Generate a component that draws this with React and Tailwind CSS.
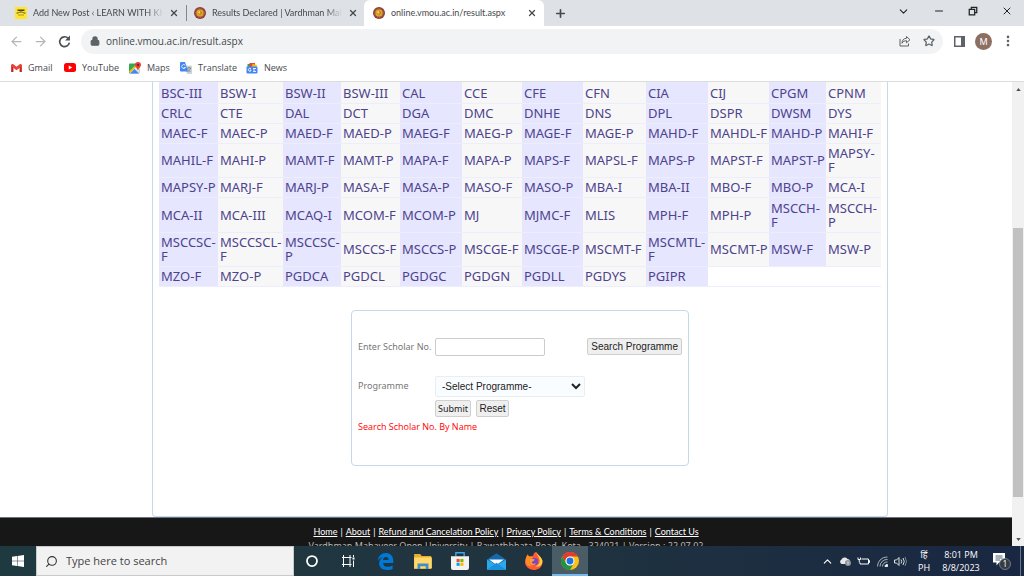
import { ArrowLeft, ArrowRight, ChevronDown, ChevronUp, EllipsisVertical, Lock, Minus, Plus, Search, Star, X } from 'lucide-react';

const programmes = [
  ['BSC-III', 'BSW-I', 'BSW-II', 'BSW-III', 'CAL', 'CCE', 'CFE', 'CFN', 'CIA', 'CIJ', 'CPGM', 'CPNM'],
  ['CRLC', 'CTE', 'DAL', 'DCT', 'DGA', 'DMC', 'DNHE', 'DNS', 'DPL', 'DSPR', 'DWSM', 'DYS'],
  ['MAEC-F', 'MAEC-P', 'MAED-F', 'MAED-P', 'MAEG-F', 'MAEG-P', 'MAGE-F', 'MAGE-P', 'MAHD-F', 'MAHDL-F', 'MAHD-P', 'MAHI-F'],
  ['MAHIL-F', 'MAHI-P', 'MAMT-F', 'MAMT-P', 'MAPA-F', 'MAPA-P', 'MAPS-F', 'MAPSL-F', 'MAPS-P', 'MAPST-F', 'MAPST-P', 'MAPSY- F'],
  ['MAPSY-P', 'MARJ-F', 'MARJ-P', 'MASA-F', 'MASA-P', 'MASO-F', 'MASO-P', 'MBA-I', 'MBA-II', 'MBO-F', 'MBO-P', 'MCA-I'],
  ['MCA-II', 'MCA-III', 'MCAQ-I', 'MCOM-F', 'MCOM-P', 'MJ', 'MJMC-F', 'MLIS', 'MPH-F', 'MPH-P', 'MSCCH- F', 'MSCCH- P'],
  ['MSCCSC- F', 'MSCCSCL- F', 'MSCCSC- P', 'MSCCS-F', 'MSCCS-P', 'MSCGE-F', 'MSCGE-P', 'MSCMT-F', 'MSCMTL- F', 'MSCMT-P', 'MSW-F', 'MSW-P'],
  ['MZO-F', 'MZO-P', 'PGDCA', 'PGDCL', 'PGDGC', 'PGDGN', 'PGDLL', 'PGDYS', 'PGIPR']
];

const rowHeights = ['h-[21px]', 'h-[20px]', 'h-[20px]', 'h-[34px]', 'h-[20px]', 'h-[35px]', 'h-[34px]', 'h-[20px]'];

const colWidths = [
  'w-[59px]', 'w-[65px]', 'w-[58px]', 'w-[59px]', 'w-[62px]', 'w-[60px]',
  'w-[61px]', 'w-[63px]', 'w-[62px]', 'w-[61px]', 'w-[57px]', 'w-[55px]'
];

const footerLinks = ['Home', 'About', 'Refund and Cancelation Policy', 'Privacy Policy', 'Terms & Conditions', 'Contact Us'];

function SealIcon() {
  return (
    <svg viewBox="0 0 24 24" className="size-[12px] shrink-0">
      <circle cx="12" cy="12" r="12" fill="#8f3a3c" />
      <circle cx="12" cy="12" r="9" fill="none" stroke="#c07a4a" strokeWidth="1.5" strokeDasharray="2 2" />
      <circle cx="12" cy="12" r="7.5" fill="#d9a520" />
      <circle cx="12" cy="12" r="4" fill="#f1d35a" />
      <path d="M9 12a3 3 0 1 0 3-3M12 12h3" fill="none" stroke="#a8631d" strokeWidth="1.5" />
    </svg>
  );
}

function KkhIcon() {
  return (
    <svg viewBox="0 0 24 24" className="size-[12px] shrink-0">
      <rect width="24" height="24" fill="#ffe52e" />
      <path d="M5 5h14v3H5z" fill="#4a4420" />
      <path d="M3 12h4l2-2h6l2 2h4" fill="none" stroke="#5b5120" strokeWidth="2" />
      <path d="M6 16h12" stroke="#a8962a" strokeWidth="2" />
    </svg>
  );
}

function GmailIcon() {
  return (
    <svg viewBox="0 0 24 18" className="h-[8px] w-[11px]">
      <path d="M0 2v16h5V7z" fill="#c5221f" />
      <path d="M24 2v16h-5V7z" fill="#c5221f" />
      <path d="M0 2.5C0 0 3-1 5 .8l7 5.400 7-5.400c2-1.800 5-.8 5 1.700V5L12 14 0 5z" fill="#ea4335" />
    </svg>
  );
}

function YoutubeIcon() {
  return (
    <svg viewBox="0 0 24 18" className="h-[9px] w-[12px]">
      <rect width="24" height="18" rx="5" fill="#f00" />
      <path d="M9.500 5v8l7-4z" fill="#fff" />
    </svg>
  );
}

function MapsIcon() {
  return (
    <svg viewBox="0 0 24 24" className="size-[12px]">
      <rect y="3" width="21" height="20" rx="2" fill="#34a853" />
      <path d="M0 23 17 6l4 4v11l-2 2z" fill="#dfe5e8" />
      <path d="M2 23 11 14l9 9z" fill="#4285f4" />
      <path d="M0 19 13 6l2 2L2 22z" fill="#fbbc04" />
      <path d="M18 0a6 6 0 0 0-6 6c0 4 4 5 6 11 2-6 6-7 6-11a6 6 0 0 0-6-6z" fill="#ea4335" />
      <circle cx="18" cy="6" r="2.300" fill="#8b1a12" />
    </svg>
  );
}

function TranslateIcon() {
  return (
    <svg viewBox="0 0 24 24" className="size-[12px]">
      <path d="M9 7h13a2 2 0 0 1 2 2v13a2 2 0 0 1-2 2h-8z" fill="#cfd3d8" />
      <path d="M14 12h8M18 10v2M21 12c-1 4-3 6-6 7M15 13c1 3 3 5 6 6" fill="none" stroke="#607d8b" strokeWidth="1.500" />
      <path d="M2 0h8l6 19H2a2 2 0 0 1-2-2V2a2 2 0 0 1 2-2z" fill="#4285f4" />
      <path d="M10.500 6.500A4 4 0 1 0 11 11H7.500" fill="none" stroke="#fff" strokeWidth="1.600" />
    </svg>
  );
}

function NewsIcon() {
  return (
    <svg viewBox="0 0 24 24" className="size-[12px]">
      <path d="M3 4h9v7H3z" fill="#34a853" />
      <path d="M7 2h11v8H7z" fill="#ea4335" />
      <path d="m13 4 9 2-2 8-9-2z" fill="#fbbc04" />
      <rect x="1" y="9" width="22" height="14" rx="2" fill="#4285f4" />
      <path d="M10 13.500a3 3 0 1 0 0 4v-1.500H8M14 13h6M14 16h4M14 19h6" fill="none" stroke="#fff" strokeWidth="1.700" />
    </svg>
  );
}

function ShareIcon() {
  return (
    <svg viewBox="0 0 24 24" className="size-[12px]" fill="none" stroke="#5f6368" strokeWidth="2" strokeLinejoin="round">
      <path d="M2 8v14h17v-5" />
      <path d="M15 3l7 6.500-7 6v-4c-4 0-7 1-9 5 0-6 3-9.500 9-10z" />
    </svg>
  );
}

const bookmarks = [
  { name: 'Gmail', icon: <GmailIcon />, width: 'w-[53px]' },
  { name: 'YouTube', icon: <YoutubeIcon />, width: 'w-[65px]' },
  { name: 'Maps', icon: <MapsIcon />, width: 'w-[51px]' },
  { name: 'Translate', icon: <TranslateIcon />, width: 'w-[66px]' },
  { name: 'News', icon: <NewsIcon />, width: 'w-[50px]' }
];

function TabStrip() {
  return (
    <div className="flex h-[26px] items-center bg-[#dee1e6] font-['Lato',sans-serif] text-[9px] text-[#45494d]">
      <div className="flex h-4 w-[187px] items-center gap-[6px] border-r border-[#85898e] pl-[15px] pr-[7px]">
        <KkhIcon />
        <span className="flex-1 overflow-hidden whitespace-nowrap [mask-image:linear-gradient(to_right,black_88%,transparent)]">Add New Post ‹ LEARN WITH KKH</span>
        <button aria-label="Close tab"><X className="size-[10px]" strokeWidth={3} /></button>
      </div>
      <div className="flex h-4 w-[177px] items-center gap-[6px] pl-[7px] pr-[6px]">
        <SealIcon />
        <span className="flex-1 overflow-hidden whitespace-nowrap [mask-image:linear-gradient(to_right,black_88%,transparent)]">Results Declared | Vardhman Mah</span>
        <button aria-label="Close tab"><X className="size-[10px]" strokeWidth={3} /></button>
      </div>
      <div className="flex h-full w-[180px] items-center gap-[6px] rounded-t-md bg-white pl-[9px] pr-[7px]">
        <SealIcon />
        <span className="flex-1 whitespace-nowrap">online.vmou.ac.in/result.aspx</span>
        <button aria-label="Close tab"><X className="size-[10px]" strokeWidth={3} /></button>
      </div>
      <button aria-label="New tab" className="ml-[10px]"><Plus className="size-[13px]" strokeWidth={3} /></button>
      <div className="mb-1 ml-auto flex items-center gap-[23px] pr-[11px] text-[#222]">
        <button aria-label="Search tabs"><ChevronDown className="size-[13px]" /></button>
        <button aria-label="Minimize"><Minus className="size-[12px]" /></button>
        <button aria-label="Restore">
          <svg viewBox="0 0 12 12" className="size-[10px]" fill="none" stroke="#222" strokeWidth="1.500">
            <path d="M1.500 4h6.500v6.500H1.500zM4 4V1.500h6.500V8H8" />
          </svg>
        </button>
        <button aria-label="Close"><X className="size-[12px]" /></button>
      </div>
    </div>
  );
}

function Toolbar() {
  return (
    <div className="flex h-[30px] items-center bg-white pl-[9px] pr-[9px] text-[#5f6368]">
      <button aria-label="Back" className="text-[#b4b7ba]"><ArrowLeft className="size-[15px]" /></button>
      <button aria-label="Forward" className="ml-[9px] text-[#b4b7ba]"><ArrowRight className="size-[15px]" /></button>
      <button aria-label="Reload" className="ml-[10px]">
        <svg viewBox="0 0 24 24" className="size-[13px]">
          <path d="M19 6.500A9 9 0 1 0 21 14" fill="none" stroke="#4c5054" strokeWidth="3" />
          <path d="M22 1v9h-9z" fill="#4c5054" />
        </svg>
      </button>
      <div className="ml-[10px] flex h-[25px] flex-1 items-center rounded-full bg-[#f1f3f4] pl-[9px] pr-[8px]">
        <Lock className="size-[10px] fill-[#5f6368]" strokeWidth={3} />
        <input aria-label="Address" defaultValue="online.vmou.ac.in/result.aspx" className="ml-[6px] min-w-0 flex-1 bg-transparent font-['Open_Sans',sans-serif] text-[10px] text-[#45494d] outline-none" />
        <button aria-label="Share"><ShareIcon /></button>
        <button aria-label="Bookmark" className="ml-[12px]"><Star className="size-[12px]" strokeWidth={2.5} /></button>
      </div>
      <button aria-label="Side panel" className="ml-[11px]">
        <svg viewBox="0 0 22 22" className="size-[11px]">
          <path d="M1.500 1.500h19v19h-19z" fill="none" stroke="#5f6368" strokeWidth="3" />
          <path d="M14 1h7v20h-7z" fill="#5f6368" />
        </svg>
      </button>
      <button className="ml-[10px] size-[17px] rounded-full bg-[#8d6e63] text-[9px] leading-[17px] text-white">M</button>
      <button aria-label="Menu" className="ml-[9px]"><EllipsisVertical className="size-[14px]" strokeWidth={2.5} /></button>
    </div>
  );
}

function ProgrammeTable() {
  return (
    <table className="w-full table-fixed border-collapse text-[13px] leading-[14px] text-[#4d438c]">
      <colgroup>
        {colWidths.map((width, i) => <col key={i} className={width} />)}
      </colgroup>
      <tbody>
        {programmes.map((row, i) => (
          <tr key={i} className={`${rowHeights[i]} border-b border-[#ededfb]`}>
            {row.map((code, j) => (
              <td key={code} className={`p-0 pl-[2px] align-middle ${i === 0 ? 'pt-[2px]' : ''} ${j % 2 === 0 ? 'bg-[#e6e6ff]' : 'bg-[#f7f7f7]'}`}>
                {code.includes(' ') ? <>{code.split(' ')[0]}<br />{code.split(' ')[1]}</> : <span className="whitespace-nowrap">{code}</span>}
              </td>
            ))}
          </tr>
        ))}
      </tbody>
    </table>
  );
}

function SearchForm() {
  const button = 'rounded-[2px] border border-[#cfcfcf] bg-[#efefef] text-[#222]';

  return (
    <form className="mx-auto mt-[23px] w-[338px] max-w-full rounded-[4px] border border-[#c6d9e8] pb-[31px] pl-[6px] pr-[6px] pt-[27px] text-[9px] text-[#777]">
      <div className="flex h-[18px] items-center">
        <label htmlFor="scholar" className="w-[77px] whitespace-nowrap">Enter Scholar No.</label>
        <input id="scholar" type="text" className="h-[18px] w-[110px] rounded-[2px] border border-[#ccc] bg-white px-1 font-['Liberation_Sans',sans-serif] text-[10px]" />
        <button type="button" className={`${button} ml-auto h-[17px] px-[3px] font-['Liberation_Sans',sans-serif] text-[10px] leading-[15px]`}>Search Programme</button>
      </div>
      <div className="mt-5 flex h-[21px] items-center">
        <label htmlFor="programme" className="w-[77px]">Programme</label>
        <select id="programme" className="h-[21px] w-[150px] rounded-[2px] border border-[#e8eef2] bg-[#fafdff] pl-[2px] font-['Liberation_Sans',sans-serif] text-[10px] text-[#222]">
          <option>-Select Programme-</option>
        </select>
      </div>
      <div className="mt-[3px] flex h-[17px] items-center gap-[5px] pl-[77px]">
        <button type="button" className={`${button} h-[17px] w-[36px] text-[9px] leading-[15px]`}>Submit</button>
        <button type="reset" className={`${button} h-[17px] w-[33px] font-['Liberation_Sans',sans-serif] text-[10px] leading-[15px]`}>Reset</button>
      </div>
      <a href="#search" className="mt-[3px] block font-['Open_Sans',sans-serif] leading-[14px] text-[#ff0000]">Search Scholar No. By Name</a>
    </form>
  );
}

function Scrollbar() {
  return (
    <div className="flex w-[12px] flex-col items-center bg-[#f1f1f1]">
      <div className="flex h-[14px] items-center"><svg viewBox="0 0 6 4" className="h-[3px] w-[5px]"><path d="M0 4h6L3 0z" fill="#505050" /></svg></div>
      <div className="grow-[132]" />
      <div className="w-[10px] grow-[270] bg-[#c1c1c1]" />
      <div className="grow-[35]" />
      <div className="flex h-[14px] items-center"><svg viewBox="0 0 6 4" className="h-[3px] w-[5px]"><path d="M0 0h6L3 4z" fill="#505050" /></svg></div>
    </div>
  );
}

function Footer() {
  return (
    <footer className="h-[60px] border-t border-[#6b7280] bg-[#171717] pt-[7px] text-center font-['Lato',sans-serif] text-[9px] leading-[14px] text-[#b8b8b8]">
      <nav className="text-white">
        {footerLinks.map((link, i) => (
          <span key={link}>
            {i > 0 && <span className="px-[3px]">|</span>}
            <a href="#footer" className="underline">{link}</a>
          </span>
        ))}
      </nav>
      <p className="font-['Noto_Sans',sans-serif]">Vardhman Mahaveer Open University | Rawathbhata Road, Kota - 324021 | Version : 22.07.02</p>
    </footer>
  );
}

function EdgeIcon() {
  return (
    <svg viewBox="0 0 24 24" className="size-[17px]">
      <path d="M1 11C2 4 6.500 0 12.500 0 19 0 23 4.500 23 11v3H8.500c.2 4 3 5.500 6.500 5.500 2.500 0 5-.7 7-2v5c-2 1-5 1.500-8 1.500C7.500 24 3 20.500 3 14.500 3 11 5 8 8 6.500 5 6.500 2.500 8.500 1 11zm7.500-1h8c0-3-1.500-4.500-4-4.500S8.800 7 8.500 10z" fill="#0078d7" />
    </svg>
  );
}

function FolderIcon() {
  return (
    <svg viewBox="0 0 26 22" className="h-[15px] w-[18px]">
      <path d="M0 0h9l2 3h14v19H0z" fill="#e9ad32" />
      <path d="M0 5h26v16H0z" fill="#ffd969" />
      <path d="M5 22v-8h16v8h-4v-4H9v4z" fill="#3f8fce" />
    </svg>
  );
}

function StoreIcon() {
  return (
    <svg viewBox="0 0 26 26" className="size-[18px]">
      <path d="M7 7V1h12v6" fill="none" stroke="#39a8e8" strokeWidth="2" />
      <path d="M0 6h26v17a3 3 0 0 1-3 3H3a3 3 0 0 1-3-3z" fill="#f2f2f2" />
      <path d="M8 10h4.500v4.500H8z" fill="#f25022" />
      <path d="M13.500 10H18v4.500h-4.500z" fill="#7fba00" />
      <path d="M8 15.500h4.500V20H8z" fill="#00a4ef" />
      <path d="M13.500 15.500H18V20h-4.500z" fill="#ffb900" />
    </svg>
  );
}

function MailIcon() {
  return (
    <svg viewBox="0 0 28 24" className="h-[17px] w-[19px]">
      <path d="M0 9 14 0l14 9v6H0z" fill="#1468ad" />
      <path d="M3 9h22l-11 8z" fill="#f4f8fb" />
      <path d="M0 9l14 8 14-8v15H0z" fill="#2aa9ed" />
      <path d="M0 24 14 14l14 10z" fill="#1b91db" />
    </svg>
  );
}

function FirefoxIcon() {
  return (
    <svg viewBox="0 0 24 24" className="size-[18px]">
      <path d="M4 3c0 2 1 3 2 3l5-1c0-3 2-5 4-5 0 2 2 3 5 6 3 4 4 6 3 10-1 5-6 8-11 8C5 24 0 19 0 13c0-4 2-7 4-10z" fill="#ff5a36" />
      <path d="M15 0c0 3 3 5 4 9 2 5-1 9-5 10 6 2 10-3 9-8-1-4-5-6-8-11z" fill="#ffd23e" />
      <path d="M4 3c0 2 1 3 2 3 2 0 4 0 5 2l-4 2c-2 1-2 7 3 9-5 1-9-2-9-7 0-4 1-7 3-9z" fill="#ff8f25" />
      <circle cx="12.500" cy="12.500" r="5" fill="#7748c8" />
      <path d="M6 10c3-2 5 0 7 0-1 3-4 2-4 4 1 2 4 2 6 1-2 4-9 3-9-2z" fill="#ff9d2e" />
    </svg>
  );
}

function ChromeIcon() {
  return (
    <svg viewBox="0 0 24 24" className="size-[18px]">
      <circle cx="12" cy="12" r="12" fill="#fbc116" />
      <path d="M1.600 6A12 12 0 0 1 22.400 6H12a6 6 0 0 0-5.200 9z" fill="#e33b2e" />
      <path d="M1.600 6A12 12 0 0 0 12 24l5.200-9A6 6 0 0 1 6.800 15z" fill="#229342" />
      <circle cx="12" cy="12" r="6" fill="#fff" />
      <circle cx="12" cy="12" r="4.600" fill="#1a73e8" />
    </svg>
  );
}

const apps = [
  { name: 'Edge', icon: <EdgeIcon /> },
  { name: 'File Explorer', icon: <FolderIcon /> },
  { name: 'Store', icon: <StoreIcon /> },
  { name: 'Mail', icon: <MailIcon /> },
  { name: 'Firefox', icon: <FirefoxIcon /> }
];

function Tray() {
  return (
    <div className="ml-auto flex h-full items-center font-['Open_Sans','Noto_Sans',sans-serif] text-[9px] leading-[13px] text-white">
      <ChevronUp className="size-[13px]" />
      <svg viewBox="0 0 24 18" className="ml-[5px] h-[9px] w-[12px]">
        <path d="M5 14a5 5 0 0 1 0-9 7 7 0 0 1 12-1 5 5 0 0 1 5 5l-3 5z" fill="#e6e6e6" />
        <circle cx="18" cy="12" r="6" fill="#8d949b" />
        <path d="M18 9v6" stroke="#fff" strokeWidth="1.500" />
      </svg>
      <svg viewBox="0 0 26 18" className="ml-[6px] h-[9px] w-[13px]" fill="none" stroke="#fff" strokeWidth="2">
        <path d="M9 4h14v10H6v-3M23 7h2v4h-2M2 1v4h5V1M4.500 5v6" />
      </svg>
      <svg viewBox="0 0 22 22" className="ml-[7px] size-[11px]" fill="none" stroke="#fff" strokeWidth="1.600">
        <path d="M1 21A19 19 0 0 1 21 2M6 21A14 14 0 0 1 21 7M11 21a9 9 0 0 1 10-9" opacity=".8" />
        <path d="M16 21a4 4 0 0 1 5-4v4z" fill="#fff" />
      </svg>
      <svg viewBox="0 0 26 22" className="ml-[6px] h-[11px] w-[13px]" fill="none" stroke="#fff" strokeWidth="1.700">
        <path d="M1 8h4l5-5v16l-5-5H1zM14 7q3 4 0 8M18 4q5 7 0 14" />
        <path d="M22 2q6 9 0 18" opacity=".5" />
      </svg>
      <div className="ml-[10px] w-[14px] text-center"><div>हिं</div><div>PH</div></div>
      <div className="ml-[9px] w-[42px] whitespace-nowrap text-center"><div>8:01 PM</div><div>8/8/2023</div></div>
      <button aria-label="1 new notification" className="ml-[11px]">
        <svg viewBox="0 0 36 36" className="size-[18px]">
          <path d="M0 2h24v19H12l-5 6v-6H0z" fill="#fff" />
          <path d="M5 8h14M5 12h14M5 16h9" stroke="#1c2c3f" strokeWidth="1.500" />
          <circle cx="24" cy="24" r="11" fill="#343b43" stroke="#8b9299" strokeWidth="1.500" />
          <text x="24" y="30" textAnchor="middle" fontSize="17" fill="#fff">1</text>
        </svg>
      </button>
      <div className="ml-[9px] h-full w-[4px] border-l border-[#6a7786]" />
    </div>
  );
}

function Taskbar() {
  return (
    <div className="flex h-[30px] shrink-0 items-center bg-linear-to-r from-[#1f3940] via-[#20343f] to-[#192742]">
      <button aria-label="Start" className="flex w-[36px] justify-center">
        <svg viewBox="0 0 24 24" className="size-[12px]"><path d="M0 3.500 10 2v9.500H0zM11 2l13-2v11.500H11zM0 12.500h10V22L0 20.500zM11 12.500h13V24l-13-2z" fill="#fff" /></svg>
      </button>
      <label className="flex h-full w-[258px] items-center border border-[#c8cacb] bg-[#f2f2f2] pl-[8px]">
        <Search className="size-[13px] -scale-x-100 text-[#333]" />
        <input aria-label="Search" placeholder="Type here to search" className="ml-[8px] w-[180px] bg-transparent font-['Open_Sans',sans-serif] text-[11px] outline-none placeholder:text-[#444]" />
      </label>
      <button aria-label="Cortana" className="flex w-[36px] justify-center">
        <svg viewBox="0 0 24 24" className="size-[12px]"><circle cx="12" cy="12" r="10" fill="none" stroke="#fff" strokeWidth="3.500" /></svg>
      </button>
      <button aria-label="Task view" className="flex w-[36px] justify-center">
        <svg viewBox="0 0 26 24" className="h-[12px] w-[13px]" fill="none" stroke="#fff" strokeWidth="2">
          <path d="M3 0v5h13V0M0 5h19M3 5v14h13V5M0 19h19M3 24v-5M16 24v-5M23 0v4M23 11v13" />
          <path d="M21 5h4v4h-4z" fill="#fff" stroke="none" />
        </svg>
      </button>
      <div className="flex h-full items-center pl-[1px]">
        {apps.map(app => (
          <button key={app.name} aria-label={app.name} className="flex w-[37px] justify-center">{app.icon}</button>
        ))}
        <button aria-label="Chrome" className="flex h-full w-[36px] items-center justify-center border-b-2 border-[#76b9ed] bg-[#4a5d67] pt-[2px]"><ChromeIcon /></button>
      </div>
      <Tray />
    </div>
  );
}

export default function App() {
  return (
    <div className="flex h-screen flex-col overflow-hidden bg-white font-['Noto_Sans',sans-serif]">
      {/* Browser chrome */}
      <header className="shrink-0">
        <TabStrip />
        <Toolbar />
        <nav className="flex h-[25px] items-center bg-white pl-[11px] pb-[2px] font-['Open_Sans',sans-serif] text-[9px] text-[#45494d]">
          {bookmarks.map(item => (
            <a key={item.name} href="#bookmark" className={`flex items-center gap-[6px] ${item.width}`}>{item.icon}{item.name}</a>
          ))}
        </nav>
      </header>

      {/* Page */}
      <div className="flex min-h-0 flex-1 border-t border-[#dcdcdc]">
        <div className="min-w-0 flex-1 overflow-hidden">
          <div className="pl-[152px] pr-[124px]">
            <main className="rounded-b-[4px] border border-t-0 border-[#c6d9e8] px-[6px] pb-[50px]">
              <ProgrammeTable />
              <SearchForm />
            </main>
          </div>
          <Footer />
        </div>
        <Scrollbar />
      </div>

      <Taskbar />
    </div>
  );
}
